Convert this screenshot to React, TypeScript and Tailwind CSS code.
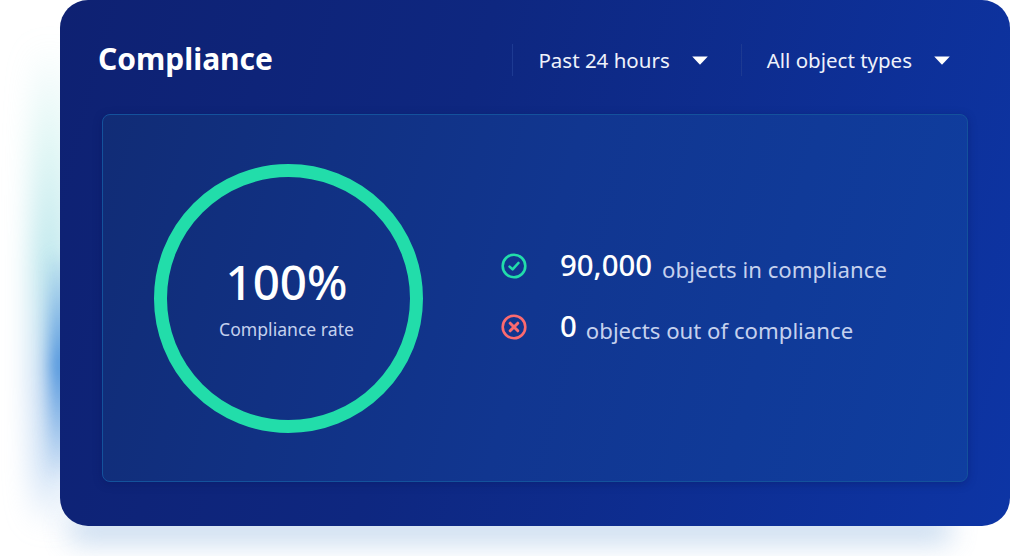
import React from "react";

const font = { fontFamily: '"Noto Sans", "Open Sans", sans-serif' };

function Caret() {
  return (
    <svg width="16" height="9" viewBox="0 0 16 9" className="block">
      <path d="M0.2 0.5H15.8L8 8.7Z" fill="#ffffff" />
    </svg>
  );
}

function CheckIcon() {
  return (
    <svg width="26" height="26" viewBox="0 0 26 26" fill="none" className="block">
      <circle cx="13" cy="13" r="11.3" stroke="#22DDAA" strokeWidth="2.6" />
      <path d="M8.6 13.6L11.6 16.4L17.4 10" stroke="#22DDAA" strokeWidth="2.6" strokeLinecap="round" strokeLinejoin="round" />
    </svg>
  );
}

function CrossIcon() {
  return (
    <svg width="26" height="26" viewBox="0 0 26 26" fill="none" className="block">
      <circle cx="13" cy="13" r="11.3" stroke="#FB6A6F" strokeWidth="2.6" />
      <path d="M9.2 9.2L16.8 16.8M16.8 9.2L9.2 16.8" stroke="#FB6A6F" strokeWidth="3" strokeLinecap="round" />
    </svg>
  );
}

export default function App() {
  return (
    <div className="relative h-[556px] w-[1010px] overflow-hidden bg-white" style={font}>
      <div className="absolute left-[30px] top-[40px] h-[490px] w-[40px] bg-[linear-gradient(180deg,rgba(170,230,225,0)_0%,rgba(150,225,220,0.3)_22%,rgba(130,210,220,0.5)_45%,rgba(140,185,230,0.5)_70%,rgba(150,190,235,0.4)_88%,rgba(150,190,235,0)_100%)] blur-[13px]" />
      <div className="absolute left-[50px] top-[250px] h-[230px] w-[20px] bg-[linear-gradient(180deg,rgba(50,130,215,0)_0%,rgba(50,130,215,0.9)_50%,rgba(50,130,215,0)_100%)] blur-[8px]" />
      <div className="absolute bottom-[14px] left-[70px] h-[26px] w-[880px] bg-[#7ba8da] opacity-45 blur-[14px]" />

      <div className="relative ml-[60px] flex h-[526px] w-[950px] flex-col rounded-[28px] bg-[linear-gradient(105deg,#0e2172_0%,#0e2780_40%,#0d35a5_100%)] pl-[38px] pr-[42px]">
        <div className="flex h-[114px] shrink-0 items-start justify-between">
          <h1 className="mt-[38px] text-[30px] font-bold leading-[42px] text-white">Compliance</h1>
          <div className="mt-[44px] flex h-[32px] items-center text-[20.5px] leading-[32px] text-[#eef2fb]">
            <div className="flex h-[32px] items-center border-l border-[#1d3a92] pl-[25px]">
              <span>Past 24 hours</span>
              <span className="ml-[22px] mr-[33px]"><Caret /></span>
            </div>
            <div className="flex h-[32px] items-center border-l border-[#1d3a92] pl-[25px]">
              <span>All object types</span>
              <span className="ml-[22px] mr-[18px]"><Caret /></span>
            </div>
          </div>
        </div>

        <div className="ml-[4px] flex h-[368px] w-[866px] items-center rounded-[8px] border border-[#14529c] bg-[linear-gradient(105deg,#112c76_0%,#113690_50%,#0f3ea0_100%)] pl-[51px] shadow-[0_2px_8px_rgba(8,20,90,0.35)]">
          <div className="flex h-[269px] w-[269px] shrink-0 flex-col items-center justify-center rounded-full border-[13px] border-[#22DDAA]">
            <div className="ml-[-4px] mt-[-3px] text-[47.5px] font-medium leading-[60px] text-white">100%</div>
            <div className="ml-[-4px] mt-[5px] text-[17.6px] leading-[24px] text-[#c5d1ee]">Compliance rate</div>
          </div>

          <div className="ml-[78px] flex flex-col gap-[25px] pt-[2px]">
            <div className="flex h-[36px] items-center">
              <span className="mt-[-6px]"><CheckIcon /></span>
              <div className="ml-[33px] flex items-baseline text-[22.2px] text-[#c5d1ee]">
                <span className="mr-[10px] -translate-y-[2px] text-[29.4px] font-medium leading-[36px] text-white">90,000</span>
                <span className="leading-[36px]">objects in compliance</span>
              </div>
            </div>
            <div className="flex h-[36px] items-center">
              <span className="mt-[-6px]"><CrossIcon /></span>
              <div className="ml-[33px] flex items-baseline text-[22.2px] text-[#c5d1ee]">
                <span className="mr-[9px] -translate-y-[2px] text-[29.4px] font-medium leading-[36px] text-white">0</span>
                <span className="leading-[36px]">objects out of compliance</span>
              </div>
            </div>
          </div>
        </div>
      </div>
    </div>
  );
}
